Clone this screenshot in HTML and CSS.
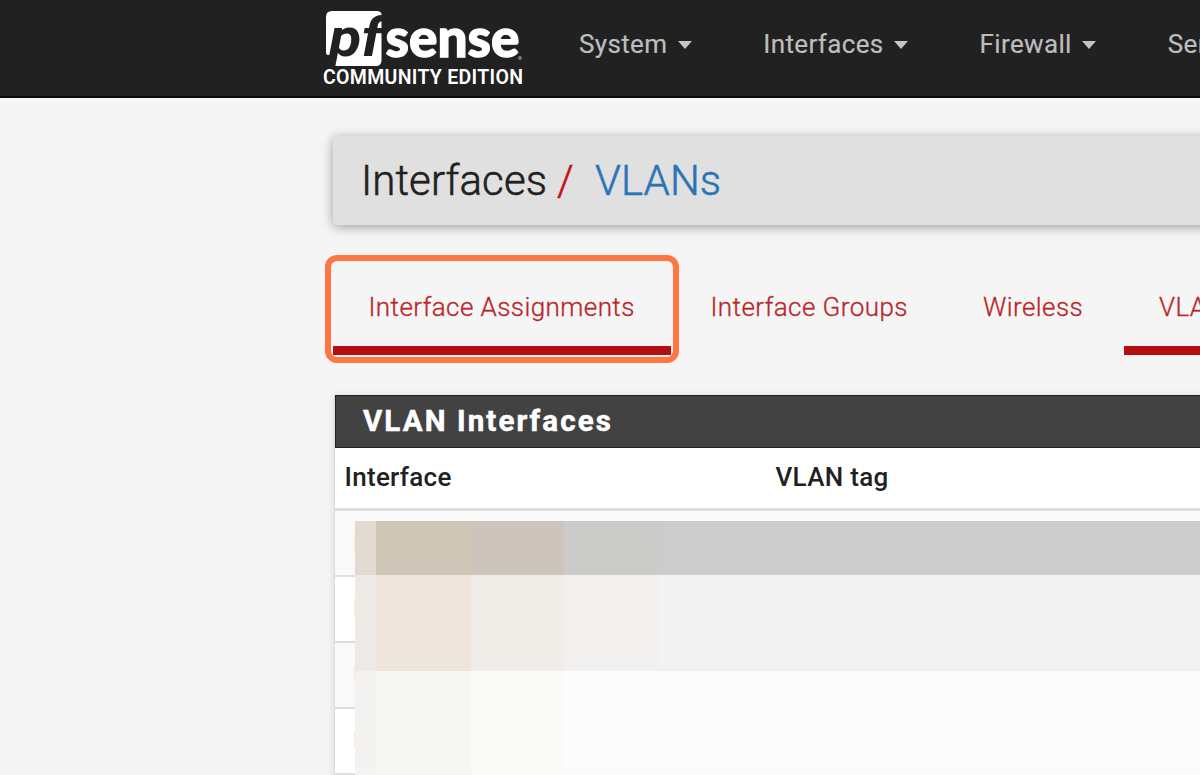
FILE: index.html
```html
<!DOCTYPE html>
<html lang="en">
<head>
<meta charset="utf-8">
<title>Interfaces / VLANs</title>
<link rel="stylesheet" href="styles.css">
</head>
<body>
<header class="navbar">
  <svg class="logo" width="204" height="84" viewBox="0 0 204 84" role="img" aria-label="pfSense Community Edition">
    <path d="M10 5H54Q59 5 59.500 8V55Q59 60 54 60H14Q11 60 11.500 57L13 49H6Q4 49 4 46V11Q4 5 10 5Z" fill="#fff"/>
    <text class="logo-pf" x="7" y="49.500" textLength="53" lengthAdjust="spacingAndGlyphs">pf</text>
    <text class="logo-sense" x="63.500" y="50.500" textLength="134" lengthAdjust="spacingAndGlyphs">sense</text>
    <circle cx="198" cy="52" r="2" fill="#777"/>
    <text class="logo-edition" x="1" y="77.500" textLength="200" lengthAdjust="spacing">COMMUNITY EDITION</text>
  </svg>
  <nav class="menu">
    <a class="menu-item">System<i class="caret"></i></a>
    <a class="menu-item">Interfaces<i class="caret"></i></a>
    <a class="menu-item">Firewall<i class="caret"></i></a>
    <a class="menu-item">Services<i class="caret"></i></a>
  </nav>
</header>
<main class="content">
  <div class="breadcrumb"><span class="crumb">Interfaces</span><span class="slash">/</span><a class="crumb-link">VLANs</a></div>
  <div class="tabs">
    <a class="tab tab-first">Interface Assignments</a>
    <a class="tab tab-groups">Interface Groups</a>
    <a class="tab tab-wireless">Wireless</a>
    <a class="tab tab-active">VLANs</a>
    <div class="highlight"></div>
  </div>
  <section class="panel">
    <h2 class="panel-title">VLAN Interfaces</h2>
    <div class="table-head"><span class="col-interface">Interface</span><span>VLAN tag</span></div>
    <div class="rows">
      <div class="row"><i class="mark"></i></div>
      <div class="row"><i class="mark"></i></div>
      <div class="row"><i class="mark"></i></div>
      <div class="row"><i class="mark"></i></div>
      <div class="mosaic">
        <i class="m-a1"></i><i class="m-a2"></i><i class="m-a3"></i><i class="m-a4"></i><i class="m-a5"></i>
        <i class="m-b1"></i><i class="m-b2"></i><i class="m-b3"></i><i class="m-b4"></i><i class="m-b5"></i>
        <i class="m-c1"></i><i class="m-c2"></i><i class="m-c3"></i><i class="m-c4"></i><i class="m-c5"></i>
        <i class="m-d1"></i><i class="m-d2"></i><i class="m-d3"></i><i class="m-d4"></i><i class="m-d5"></i>
      </div>
    </div>
  </section>
</main>
</body>
</html>
```
FILE: styles.css
```css
* { box-sizing: border-box; }
body {
  margin: 0;
  width: 1200px;
  height: 775px;
  overflow: hidden;
  background: #f5f5f5;
  color: #212121;
  font-family: Roboto, "Liberation Sans", sans-serif;
  font-size: 26px;
}
.navbar {
  display: flex;
  height: 98px;
  padding: 6px 0 0 322px;
  overflow: hidden;
  background: #212121;
  border-bottom: 2px solid #070707;
}
.logo { flex: none; margin-right: 53px; }
.logo-pf { font: italic 700 54px Roboto, sans-serif; fill: #212121; }
.logo-sense { font: 900 54px Lato, sans-serif; fill: #fff; stroke: #fff; stroke-width: 1.300px; }
.logo-edition { font: 600 19.500px Roboto, sans-serif; fill: #fff; }
.menu { display: flex; gap: 71.500px; padding-top: 23px; }
.menu-item {
  display: flex;
  flex: none;
  align-items: center;
  gap: 10.500px;
  height: 31px;
  color: #bdbdbd;
  letter-spacing: .35px;
  line-height: 31px;
  -webkit-text-stroke: .2px;
}
.caret {
  border: 7.500px solid transparent;
  border-top: 8px solid #c4c4c4;
  border-bottom: 0;
}
.content {
  width: 1200px;
  height: 677px;
  padding: 38px 0 0 333px;
  overflow: hidden;
}
.breadcrumb {
  display: flex;
  height: 89px;
  margin-right: -20px;
  padding-left: 28px;
  background: #e0e0e0;
  border-radius: 4px;
  box-shadow: 0 2px 12px rgba(0, 0, 0, .36);
  font-size: 42px;
  font-weight: 300;
  letter-spacing: .1px;
  line-height: 89px;
  -webkit-text-stroke: .55px;
}
.slash { color: #c40f14; margin: 0 21px 0 10px; }
.crumb-link { color: #2875b8; }
.tabs {
  position: relative;
  display: flex;
  height: 170px;
  padding-top: 34px;
  font-weight: 300;
  letter-spacing: .43px;
  white-space: nowrap;
  -webkit-text-stroke: .3px;
}
.tab { flex: none; height: 96px; line-height: 96px; color: #b8262a; }
.tab-first { width: 338px; padding-left: 35.500px; border-bottom: 9px solid #b50f12; }
.tab-groups { width: 272px; padding-left: 39.500px; }
.tab-wireless { width: 181px; padding-left: 40px; }
.tab-active { width: 130px; padding-left: 35px; border-bottom: 9px solid #b50f12; }
.highlight {
  position: absolute;
  left: -8px;
  top: 30px;
  width: 354px;
  height: 108px;
  border: 6px solid #ff7544;
  border-radius: 12px;
}
.panel {
  height: 400px;
  margin: 0 -20px 0 1px;
  border-left: 1px solid #dcdcdc;
  background: #fff;
  box-shadow: 0 1px 8px rgba(0, 0, 0, .12);
}
.panel-title {
  height: 53px;
  margin: 0;
  padding-left: 27px;
  border: 1px solid #222;
  background: #424242;
  color: #fff;
  font-size: 29.500px;
  font-weight: 700;
  letter-spacing: 2.100px;
  line-height: 51px;
  -webkit-text-stroke: .5px;
}
.table-head {
  display: flex;
  height: 63px;
  padding-left: 9.500px;
  border-bottom: 3px solid #dedede;
  font-weight: 500;
  letter-spacing: .3px;
  line-height: 58px;
}
.col-interface { width: 431px; }
.rows { position: relative; }
.row { display: flex; height: 66px; padding: 22px 0 0 19px; border-bottom: 2px solid #dedede; }
.row:nth-child(odd) { background: #f9f9f9; }
.mark { width: 2px; height: 17px; background: #f4f3c8; }
.mosaic {
  position: absolute;
  left: 20px;
  top: 10px;
  display: grid;
  grid-template-columns: 21px 95px 93px 94px 542px;
  grid-template-rows: 54px 96px 97px 20px;
}
.m-a1 { background: #e1dad1; }
.m-a2 { background: #cfc6b7; }
.m-a3 { background: #cdc4bb; }
.m-a4 { background: #cbcbca; }
.m-a5 { background: #cccccc; }
.m-b1 { background: #edeae6; }
.m-b2 { background: #eee6dd; }
.m-b3 { background: #efece7; }
.m-b4 { background: #f1f0ee; }
.m-b5 { background: #f2f2f2; }
.m-c1 { background: #f3f2f1; }
.m-c2 { background: #f6f6f4; }
.m-c3 { background: #fafaf8; }
.m-c4, .m-c5 { background: #fcfcfc; }
.m-d1 { background: #f4f4f3; }
.m-d2 { background: #f6f6f5; }
.m-d3 { background: #f9f9f8; }
.m-d4, .m-d5 { background: #fafafa; }
```
